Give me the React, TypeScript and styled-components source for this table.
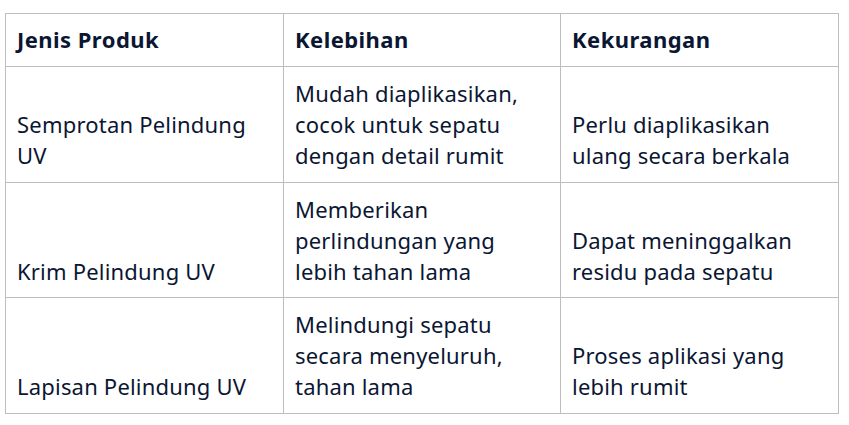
import React from "react";
import styled, { createGlobalStyle } from "styled-components";

const Global = createGlobalStyle`
  html, body { margin: 0; padding: 0; background: #ffffff; }
`;

const Wrap = styled.div`
  padding: 13px 0 0 5px;
  font-family: "Noto Sans", "Open Sans", sans-serif;
  color: #0b1633;
`;

const Table = styled.table`
  border-collapse: collapse;
  width: 834px;
  table-layout: fixed;
  font-size: 22px;
  line-height: 31px;
  letter-spacing: 0.2px;
`;

const Th = styled.th`
  border: 1px solid #bdbdbd;
  padding: 10px 16px 11px 11px;
  text-align: left;
  font-weight: 700;
  letter-spacing: 0.45px;
  vertical-align: bottom;
`;

const Td = styled.td`
  border: 1px solid #bdbdbd;
  padding: 11px 16px 10.5px 11px;
  text-align: left;
  font-weight: 400;
  vertical-align: bottom;
`;

const rows = [
  ["Semprotan Pelindung UV", "Mudah diaplikasikan, cocok untuk sepatu dengan detail rumit", "Perlu diaplikasikan ulang secara berkala"],
  ["Krim Pelindung UV", "Memberikan perlindungan yang lebih tahan lama", "Dapat meninggalkan residu pada sepatu"],
  ["Lapisan Pelindung UV", "Melindungi sepatu secara menyeluruh, tahan lama", "Proses aplikasi yang lebih rumit"],
];

export default function App() {
  return (
    <Wrap>
      <Global />
      <Table>
        <colgroup>
          <col style={{ width: 278 }} />
          <col style={{ width: 277 }} />
          <col style={{ width: 278 }} />
        </colgroup>
        <thead>
          <tr>
            <Th>Jenis Produk</Th>
            <Th>Kelebihan</Th>
            <Th>Kekurangan</Th>
          </tr>
        </thead>
        <tbody>
          {rows.map((r) => (
            <tr key={r[0]}>
              {r.map((c) => (
                <Td key={c}>{c}</Td>
              ))}
            </tr>
          ))}
        </tbody>
      </Table>
    </Wrap>
  );
}
